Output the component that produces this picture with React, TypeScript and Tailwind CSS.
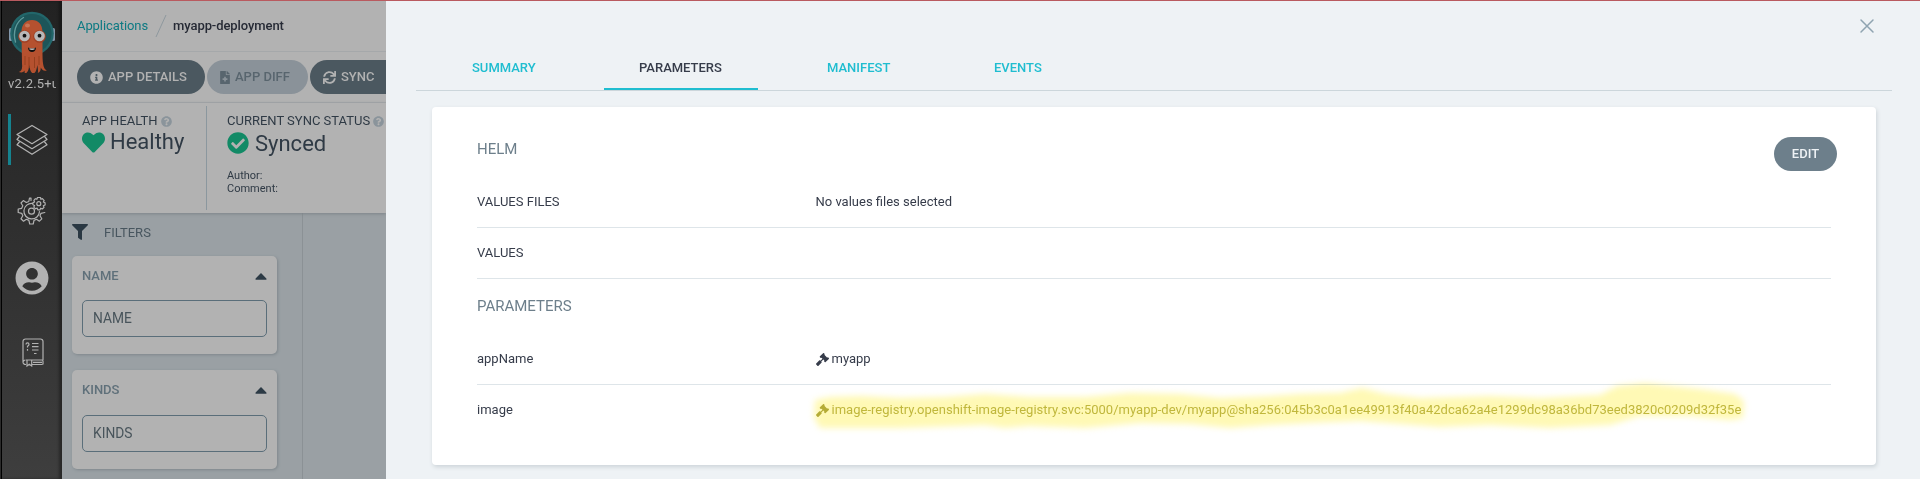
import React from "react";
import {
  FaCaretUp,
  FaCheckCircle,
  FaFileMedical,
  FaFilter,
  FaGavel,
  FaHeart,
  FaInfoCircle,
  FaQuestionCircle,
  FaSync,
  FaUserCircle,
} from "react-icons/fa";

function ArgoLogo() {
  return (
    <svg width="46" height="62" viewBox="0 0 46 62" className="block">
      <rect x="0" y="17" width="4" height="13" rx="1.5" fill="#8297ab" />
      <rect x="42" y="17" width="4" height="13" rx="1.5" fill="#8297ab" />
      <circle cx="23" cy="22.500" r="21.800" fill="#22666a" />
      <circle cx="23" cy="22.500" r="19.500" fill="#1d5559" />
      <path d="M6.500 31C3.500 21 7 11 14.500 6.500" fill="none" stroke="#5f9a9b" strokeWidth="1.400" strokeLinecap="round" />
      <path
        d="M12.500 21c0-8 4.500-12 10.500-12s10.500 4 10.500 12v19c0 5 0 10 .8 14 .5 3 2 5 3.500 5.500-3 .8-5-.5-6-3 0 3-1 5-3 5.500.5-2 0-5-.5-8-.5 4-1.500 8-4 8.500-2.500-.5-3.500-4-4-8.500-.5 4-1 6.500-3.500 8.500-1 .3-1.500-1-1-3-1.500 2-3.500 2.500-6 1.500 3-1 3.700-4 3.200-8z"
        fill="#b5512f"
      />
      <path d="M16 45v9M20 46v11M25.500 46v11M30 45v9" stroke="#96401f" strokeWidth="1" fill="none" />
      <ellipse cx="18.500" cy="14.500" rx="2.500" ry="2" fill="#c77657" />
      <circle cx="15.500" cy="25.500" r="6.300" fill="#a04024" />
      <circle cx="30.500" cy="25.500" r="6.300" fill="#a04024" />
      <circle cx="15.500" cy="25" r="5.300" fill="#b8b8b8" />
      <circle cx="30.500" cy="25" r="5.300" fill="#b8b8b8" />
      <circle cx="15.500" cy="24.700" r="1.900" fill="#111" />
      <circle cx="30.500" cy="24.700" r="1.900" fill="#111" />
      <path d="M19 36.500q4 2 8 0c0 6-8 6-8 0z" fill="#111" />
      <path d="M20.500 37.200q2.500.8 5 0v1.300q-2.500.8-5 0z" fill="#c8c8c8" />
    </svg>
  );
}

function StackIcon() {
  return (
    <svg width="32" height="32" viewBox="0 0 32 32" fill="none" stroke="#b2b2b2" strokeWidth="1.300" strokeLinejoin="round">
      <path d="M16 1.500L31 10.500L16 19.700L1 10.500Z" />
      <path d="M3.700 12.200L1 15.500L16 24.700L31 15.500L28.300 12.200" />
      <path d="M3.700 17.500L1 20.800L16 30.300L31 20.800L28.300 17.500" />
    </svg>
  );
}

function GearsIcon() {
  return (
    <svg width="30" height="30" viewBox="0 0 30 30" fill="none" stroke="#b2b2b2" strokeWidth="1.200" strokeLinejoin="round" strokeLinecap="round">
      <path d="M14 4.500V2.200L12.500 2L11.800 5.500L9.300 6.500L6.300 4.600L4 7L5.800 9.800L4.700 12.300L1.200 13V16.500L4.700 17.300L5.800 19.800L4 22.800L6.500 25.200L9.400 23.300L11.900 24.400L12.700 28H16.200L17 24.400L19.500 23.300L22.400 25.200L24.800 22.800L23 19.800L24 17.300L27.800 16.500" />
      <path d="M15.500 7.400A7.800 7.800 0 1 0 22.500 15.500" />
      <circle cx="14.500" cy="15.200" r="3" />
      <path d="M20.500 1.500h3l.4 1.800 1.500-.7 1.800 2-.9 1.400 1.800.7v2.300l-1.800.7.7 1.600-1.700 1.700-1.600-.8-.7 1.600h-2.200l-.7-1.700-1.600.7-1.700-1.700.8-1.600-1.700-.7V6.700l1.700-.7-.7-1.600L18.400 2.700l1.500.6z" />
      <circle cx="21.800" cy="7.700" r="2" />
    </svg>
  );
}

function BookIcon() {
  return (
    <svg width="22" height="29" viewBox="0 0 22 29" fill="none" stroke="#b2b2b2" strokeWidth="1.200">
      <path d="M4 26.500H3.500a2.500 2.500 0 0 1-2.500-2.500V3.500A2.500 2.500 0 0 1 3.500 1H18.500A2.500 2.500 0 0 1 21 3.500V22M10 26.500H20.500M4 22H20a1 1 0 0 1 1 1v3.500M1 24.500A2.500 2.500 0 0 1 3.500 22M11 24.300H20" />
      <path d="M5 22V28L7.300 26.300L9.700 28V22" />
      <path d="M4 6.500q0-1.700 1.500-1.700T7 6.500q0 1-1.500 1.700V9.500M5.500 11v1.700M10 5.500H16.500M10 8.700H16.500M10 12H16.500M12 15.500H14.500" />
    </svg>
  );
}

function Sidebar() {
  return (
    <aside className="flex w-[62px] shrink-0 border-l border-[#2b2b2b]">
      <div className="w-px bg-black" />
      <div className="flex flex-1 flex-col items-center bg-linear-to-b from-[#222222] to-[#3e3e3e] pt-[10px] shadow-[inset_-3px_0_3px_rgba(0,0,0,0.35)]">
        <ArgoLogo />
        <div className="mt-px h-[20px] w-[48px] overflow-hidden text-[13px] leading-[20px] tracking-[0.2px] whitespace-nowrap text-[#b2b2b2]">
          v2.2.5+unknown
        </div>
        <div className="mt-[20px] flex h-[51px] w-full items-center">
          <div className="ml-[6px] h-full w-[3px] bg-[#15838f]" />
          <div className="ml-[5px] pt-px">
            <StackIcon />
          </div>
        </div>
        <div className="mt-[31px]">
          <GearsIcon />
        </div>
        <FaUserCircle className="mt-[35px] size-[34px] text-[#b2b2b2]" />
        <div className="mt-[43px] ml-px">
          <BookIcon />
        </div>
      </div>
    </aside>
  );
}

function FilterCard({ title, height, gap }: { title: string; height: string; gap: string }) {
  return (
    <div className={`w-[205px] rounded-[5px] bg-[#b2b2b2] px-[10px] shadow-[1px_1px_3px_#7f878c] ${height}`}>
      <div className="flex h-[40px] items-center justify-between">
        <span className="text-[13px] font-medium text-[#5f707a]">{title}</span>
        <span className="flex h-[7px] items-center overflow-hidden">
          <FaCaretUp className="h-[20px] w-[12px] text-[#2c3a45]" preserveAspectRatio="none" />
        </span>
      </div>
      <div className={`flex h-[37px] items-center rounded-[5px] border border-[#5a6e7a] px-[10px] text-[15px] text-[#48545b] ${gap}`}>
        <span className="origin-left scale-x-[0.92]">{title}</span>
      </div>
    </div>
  );
}

function AppPage() {
  return (
    <main className="flex w-[324px] shrink-0 flex-col overflow-hidden bg-[#9aa0a4] whitespace-nowrap">
      <div className="flex h-[51px] shrink-0 items-center border-b border-[#a5a8aa] bg-[#b2b2b2] pl-[15px] text-[13px]">
        <span className="text-[#0d7a83] tracking-[-0.08px]">Applications</span>
        <svg width="12" height="24" viewBox="0 0 12 24" className="mr-[6px] ml-[7px]">
          <path d="M1 23L11 1" stroke="#8e989e" strokeWidth="1" />
        </svg>
        <span className="font-medium tracking-[-0.08px] text-[#262a35]">myapp-deployment</span>
      </div>
      <div className="flex h-[51px] shrink-0 items-center gap-[2px] border-b border-[#a5a8aa] bg-[#b2b2b2] pl-[15px] text-[13px] font-medium">
        <div className="flex h-[34px] w-[128px] shrink-0 items-center rounded-full bg-[#4b5860] pl-[13px] text-[#b2b2b2]">
          <FaInfoCircle className="mr-[5px] size-[13px]" />
          APP DETAILS
        </div>
        <div className="flex h-[34px] w-[101px] shrink-0 items-center rounded-full bg-[#8a9299] pl-[13px] text-[#58656e]">
          <FaFileMedical className="mr-[5px] h-[13px] w-[10px]" />
          APP DIFF
        </div>
        <div className="flex h-[34px] w-[101px] shrink-0 items-center rounded-full bg-[#4b5860] pl-[13px] text-[#b2b2b2]">
          <FaSync className="mr-[5px] size-[13px]" />
          SYNC
        </div>
      </div>
      <div className="relative flex h-[110px] shrink-0 bg-[#b2b2b2] py-[3px] text-[#2f3a45] shadow-[0_1px_3px_#7d8488]">
        <div className="w-[145px] border-r border-[#8b979e] pl-[20px]">
          <div className="mt-[6px] flex h-[18px] items-center text-[13px]">
            APP HEALTH
            <FaQuestionCircle className="ml-[3px] size-[11px] text-[#8a949b]" />
          </div>
          <div className="flex h-[24px] items-center text-[22px]">
            <FaHeart className="mr-[5px] size-[23px] text-[#128a66]" />
            <span className="pb-[2px]">Healthy</span>
          </div>
        </div>
        <div className="pl-[20px]">
          <div className="mt-[6px] flex h-[18px] items-center text-[13px]">
            CURRENT SYNC STATUS
            <FaQuestionCircle className="ml-[3px] size-[11px] text-[#8a949b]" />
          </div>
          <div className="mt-px flex h-[24px] items-center text-[22px]">
            <FaCheckCircle className="mr-[6px] size-[22px] text-[#128a66]" />
            Synced
          </div>
          <div className="mt-[14px] text-[11px] leading-[13px]">
            <div>Author:</div>
            <div>Comment:</div>
          </div>
        </div>
      </div>
      <div className="flex flex-1">
        <div className="w-[241px] shrink-0 border-r border-[#8b9195] pl-[10px]">
          <div className="flex h-[43px] items-center pb-[6px] text-[13px] text-[#48565f]">
            <FaFilter className="mr-[16px] size-[16px] text-[#2a3843]" />
            <span className="pt-[3px]">FILTERS</span>
          </div>
          <FilterCard title="NAME" height="h-[98px]" gap="mt-[4px]" />
          <div className="h-[16px]" />
          <FilterCard title="KINDS" height="h-[99px]" gap="mt-[5px]" />
        </div>
      </div>
    </main>
  );
}

function Highlight() {
  return (
    <svg
      className="pointer-events-none absolute top-[-32px] left-[-16px] mix-blend-multiply"
      width="970"
      height="70"
      viewBox="800 370 970 70"
    >
      <defs>
        <filter id="soft" x="-5%" y="-50%" width="110%" height="200%" colorInterpolationFilters="sRGB">
          <feGaussianBlur stdDeviation="3" />
        </filter>
      </defs>
      <path
        filter="url(#soft)"
        fill="#fff9b5"
        d="M814 420L815 402L830 399L860 398L900 400L945 399L985 396L1030 399L1085 399L1130 395L1180 396L1220 400L1270 398L1300 396L1340 395L1362 390L1385 396L1420 400L1490 398L1540 400L1600 397L1617 388L1645 385L1700 391L1735 396L1744 403L1743 420L1730 422L1690 418L1640 418L1610 427L1550 430L1490 427L1440 429L1400 426L1360 423L1310 425L1270 427L1230 430L1190 426L1140 425L1085 430L1030 428L1005 430L985 427L960 428L900 430L860 430L820 430Z"
      />
    </svg>
  );
}

function Row({ label, children, last }: { label: string; children?: React.ReactNode; last?: boolean }) {
  return (
    <div className={`flex h-[51px] items-center border-b text-[13px] text-[#363c4a] ${last ? "border-transparent" : "border-[#dee5e9]"}`}>
      <div className="w-[338.500px] shrink-0">{label}</div>
      <div className="relative flex items-center whitespace-nowrap">{children}</div>
    </div>
  );
}

function Tab({ label, active, width }: { label: string; active?: boolean; width: string }) {
  return (
    <div className={`flex h-[45px] items-center border-b-2 px-[35px] pt-[3px] ${width} ${active ? "border-[#1fbdd0] text-[#363c4a]" : "border-transparent text-[#1fbdd0]"}`}>
      {label}
    </div>
  );
}

function DetailsPanel() {
  return (
    <section className="flex min-w-0 flex-1 flex-col bg-[#eef2f5] pr-[28px] pl-[30px]">
      <div className="flex h-[44px] items-start justify-end pt-[17px] pr-[17px]">
        <svg width="16" height="16" viewBox="0 0 16 16" className="block">
          <path d="M2 2L14 14M14 2L2 14" stroke="#8fa4b1" strokeWidth="1.500" strokeLinecap="round" />
        </svg>
      </div>
      <div className="flex h-[46px] shrink-0 gap-[34px] border-b border-[#ccd6db] pl-[21px] text-[13px] font-medium">
        <Tab label="SUMMARY" width="w-[133px]" />
        <Tab label="PARAMETERS" width="w-[154px]" active />
        <Tab label="MANIFEST" width="w-[133px]" />
        <Tab label="EVENTS" width="w-[120px]" />
      </div>
      <div className="mt-[16px] mr-[16px] ml-[16px] h-[358px] shrink-0 rounded-[4px] bg-white pr-[45px] pl-[45px] shadow-[1px_2px_4px_#ccd3d8]">
        <div className="flex h-[70px] items-start justify-between pt-[30px]">
          <h2 className="mt-[2px] text-[15px] leading-[20px] text-[#6d7f8b]">HELM</h2>
          <button className="mr-[-6px] h-[34px] w-[63px] rounded-full bg-[#6d7f8b] text-[13px] font-medium text-[#eef2f5]">
            EDIT
          </button>
        </div>
        <Row label="VALUES FILES">No values files selected</Row>
        <Row label="VALUES" />
        <h2 className="flex h-[55px] items-center text-[15px] text-[#6d7f8b]">PARAMETERS</h2>
        <Row label="appName">
          <FaGavel className="mr-[3px] size-[13px]" />
          myapp
        </Row>
        <Row label="image" last>
          <Highlight />
          <FaGavel className="relative mr-[3px] size-[13px] text-[#b5ac35]" />
          <span className="relative tracking-[0.011px] text-[#c0b73c]">
            image-registry.openshift-image-registry.svc:5000/myapp-dev/myapp@sha256:045b3c0a1ee49913f40a42dca62a4e1299dc98a36bd73eed3820c0209d32f35e
          </span>
        </Row>
      </div>
    </section>
  );
}

export default function App() {
  return (
    <div className="flex h-[479px] w-[1920px] flex-col overflow-hidden bg-[#eef2f5] font-['Roboto',sans-serif]">
      <div className="h-px shrink-0 bg-[#b95a5f]" />
      <div className="flex min-h-0 flex-1">
        <Sidebar />
        <AppPage />
        <DetailsPanel />
      </div>
    </div>
  );
}
